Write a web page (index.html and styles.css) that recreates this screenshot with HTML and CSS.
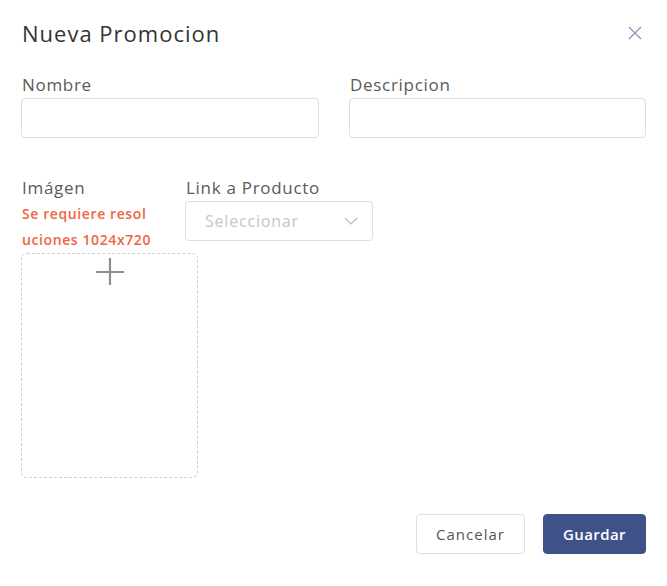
FILE: index.html
```html
<!DOCTYPE html>
<html lang="es">
<head>
<meta charset="utf-8">
<link rel="stylesheet" href="styles.css">
</head>
<body>
<div class="modal">
  <div class="header">
    <h1 class="title">Nueva Promocion</h1>
    <svg class="close" width="14" height="14" viewBox="0 0 14 14"><path d="M1 1L13 13M13 1L1 13" stroke="#8e9bb8" stroke-width="1.4" fill="none"/></svg>
  </div>
  <div class="row two">
    <div class="field">
      <label class="label">Nombre</label>
      <div class="input"></div>
    </div>
    <div class="field">
      <label class="label">Descripcion</label>
      <div class="input"></div>
    </div>
  </div>
  <div class="row media">
    <div class="col-img">
      <label class="label">Imágen</label>
      <div class="hint">Se requiere resol<br>uciones 1024x720</div>
      <div class="upload">
        <svg class="plus" width="30" height="30" viewBox="0 0 30 30"><path d="M15 1V28M1 15H29" stroke="#8a9099" stroke-width="2.2" fill="none"/></svg>
      </div>
    </div>
    <div class="col-link">
      <label class="label">Link a Producto</label>
      <div class="select">
        <span class="placeholder">Seleccionar</span>
        <svg width="14" height="8" viewBox="0 0 14 8"><path d="M1 1L7 7L13 1" stroke="#b6bcc8" stroke-width="1.2" fill="none"/></svg>
      </div>
    </div>
  </div>
  <div class="footer">
    <button class="btn cancel">Cancelar</button>
    <button class="btn save">Guardar</button>
  </div>
</div>
</body>
</html>
```
FILE: styles.css
```css
* { box-sizing: border-box; }
html, body { margin: 0; padding: 0; background: #fff; }
body { font-family: "Open Sans", "DejaVu Sans", sans-serif; }
.modal { width: 667px; height: 586px; padding: 17px 21px 0 21px; }
.header { display: flex; justify-content: space-between; align-items: center; height: 32px; }
.title { margin: 0; font-size: 22px; font-weight: 400; color: #333; letter-spacing: 1px; padding-left: 1px; }
.close { margin-right: 4px; }
.row.two { display: grid; grid-template-columns: 298px 297px; column-gap: 30px; margin-top: 24px; }
.label { display: block; font-size: 17px; color: #5a5a5a; line-height: 23px; padding-left: 1px; letter-spacing: 0.7px; }
.field .label { margin-bottom: 2px; }
.input { height: 40px; border: 1px solid #dcdee6; border-radius: 4px; }
.media { display: flex; gap: 0; margin-top: 38px; }
.col-img { width: 164px; }
.col-link { width: 188px; }
.hint { color: #f0653f; font-size: 14px; font-weight: 600; line-height: 26px; margin-top: 2px; padding-left: 1px; white-space: nowrap; letter-spacing: 0.6px; }
.upload { width: 177px; height: 225px; border: 1px dashed #d0d0d0; border-radius: 6px; margin-top: 0; display: flex; justify-content: center; padding-top: 3px; }
.select { margin-top: 2px; height: 40px; border: 1px solid #dcdee6; border-radius: 4px; display: flex; align-items: center; justify-content: space-between; padding: 0 14px 0 19px; }
.placeholder { font-size: 16px; color: #c2c6cf; letter-spacing: 0.8px; }
.footer { display: flex; justify-content: flex-end; gap: 18px; margin-top: 36px; }
.btn { height: 40px; font-family: inherit; font-size: 15px; border-radius: 4px; cursor: pointer; padding: 0; }
.cancel { width: 109px; background: #fff; border: 1px solid #dcdee6; color: #555; letter-spacing: 1px; }
.save { width: 103px; background: #3f5189; border: 1px solid #3f5189; color: #fff; font-weight: 600; letter-spacing: 0.4px; }
```
